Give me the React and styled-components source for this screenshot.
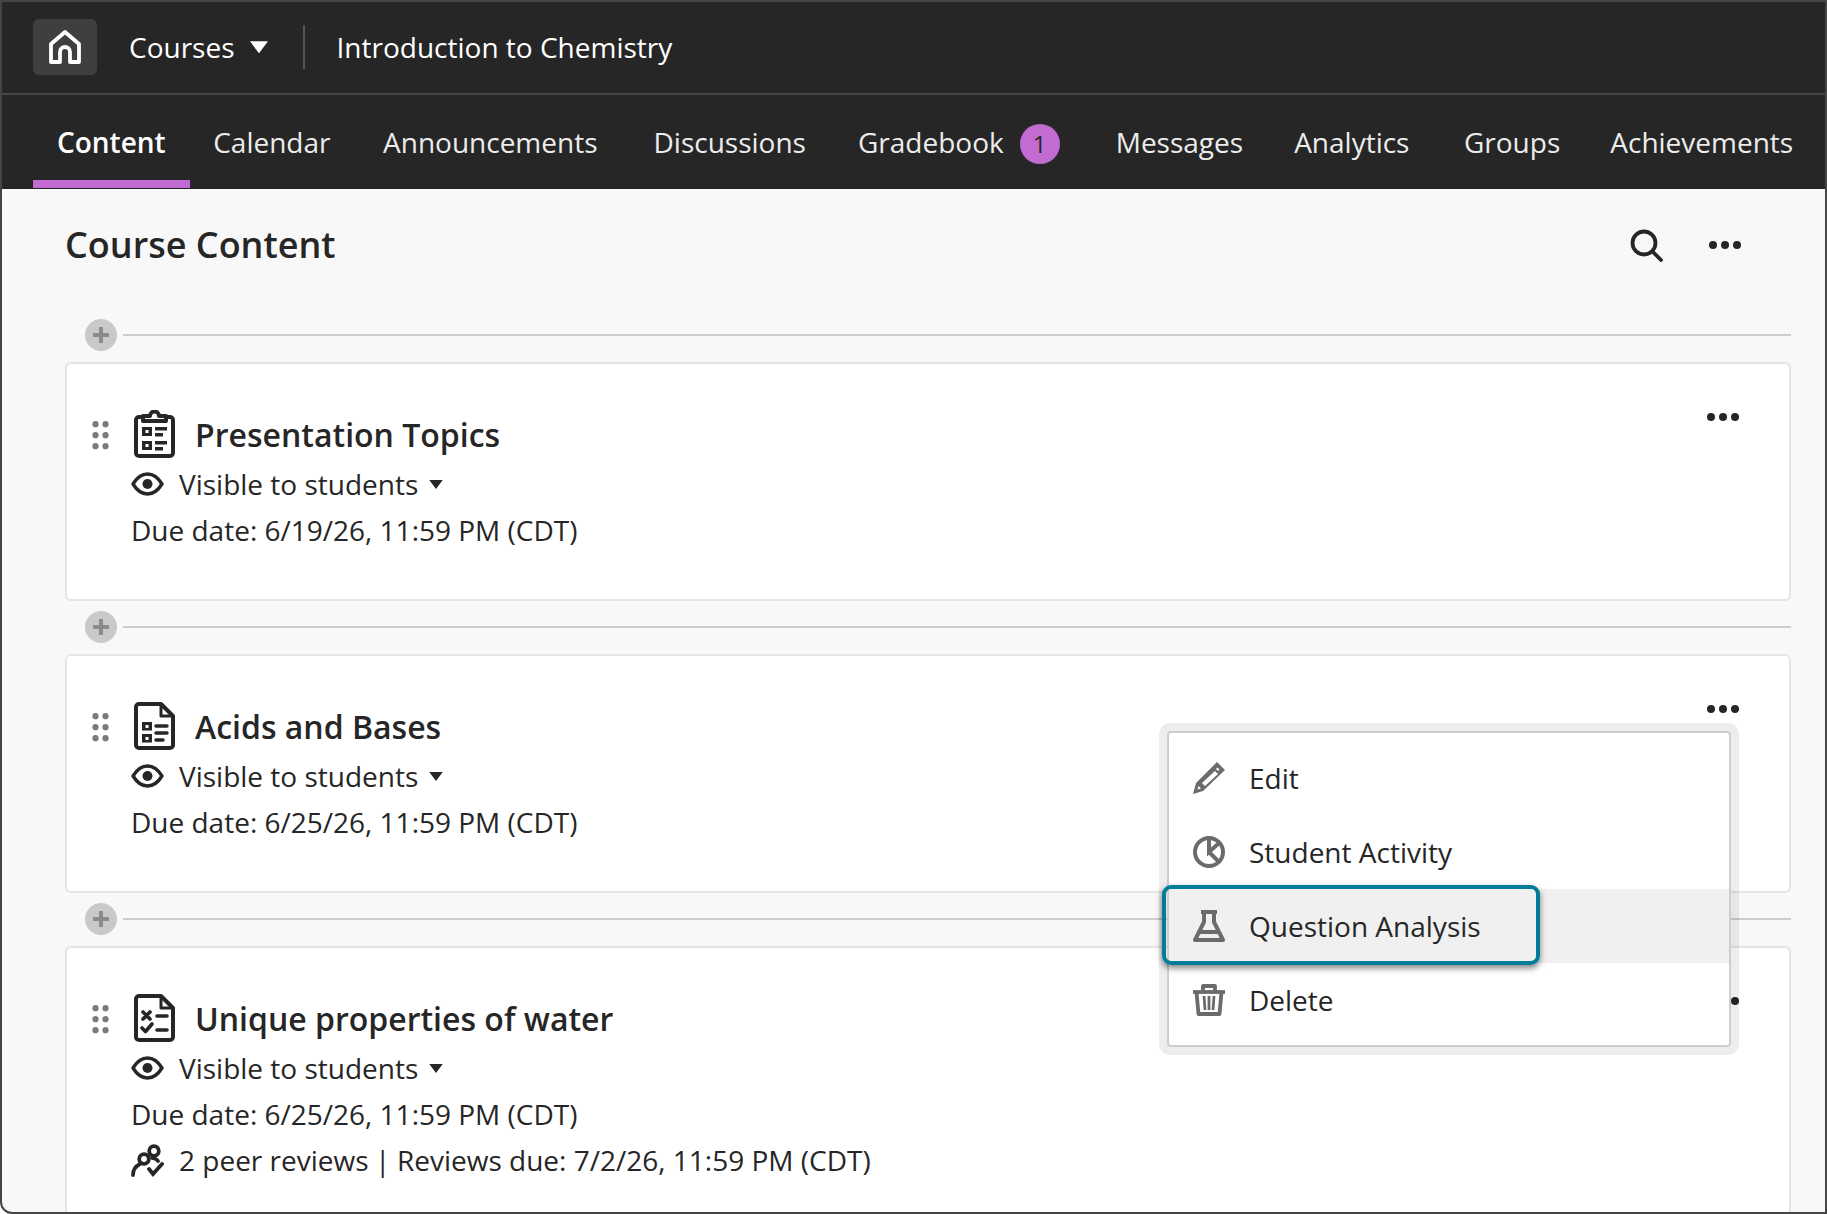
import React from "react";
import styled, { createGlobalStyle } from "styled-components";

const GlobalStyle = createGlobalStyle`
  html, body {
    margin: 0;
    padding: 0;
    background: #fff;
  }
  *, *::before, *::after {
    box-sizing: border-box;
  }
`;

const Frame = styled.div`
  width: 1827px;
  height: 1214px;
  overflow: hidden;
  border: 2px solid #454545;
  border-radius: 0 0 0 12px;
  background: #f8f8f8;
  font-family: "Open Sans", "Liberation Sans", sans-serif;
  color: #262626;
  display: flex;
  flex-direction: column;
`;

const TopBar = styled.header`
  height: 93px;
  flex: none;
  background: #262626;
  border-bottom: 2px solid #454545;
  display: flex;
  align-items: center;
  padding: 0 0 1px 31px;
  color: #fff;
  font-size: 28px;
`;

const HomeButton = styled.div`
  width: 64px;
  height: 56px;
  border-radius: 6px;
  background: #3f3f3f;
  display: flex;
  align-items: center;
  justify-content: center;
`;

const CoursesLink = styled.div`
  display: flex;
  align-items: center;
  margin-left: 32px;
  gap: 15px;
`;

const Divider = styled.div`
  width: 2px;
  height: 44px;
  background: #555;
  margin: 0 32px 0 35px;
`;

const Tabs = styled.nav`
  height: 94px;
  flex: none;
  background: #262626;
  display: flex;
  padding-left: 31px;
`;

const Tab = styled.div`
  display: flex;
  align-items: center;
  padding: 8px ${(p) => (p.$active ? 24 : 20)}px 0;
  margin-left: ${(p) => p.$gap || 0}px;
  margin-bottom: 1px;
  font-size: 28px;
  font-weight: ${(p) => (p.$active ? 600 : 400)};
  color: ${(p) => (p.$active ? "#fff" : "#ececec")};
  border-bottom: 8px solid ${(p) => (p.$active ? "#c26cd3" : "transparent")};
`;

const Badge = styled.span`
  width: 40px;
  height: 40px;
  border-radius: 50%;
  background: #c26cd3;
  color: #262626;
  font-size: 24px;
  display: flex;
  align-items: center;
  justify-content: center;
  margin: 4px 0 0 16px;
`;

const Main = styled.main`
  flex: 1;
  padding: 28px 34px 0 63px;
  min-height: 0;
`;

const PageHeader = styled.div`
  height: 56px;
  display: flex;
  align-items: center;
  justify-content: space-between;
  margin-bottom: 46px;
`;

const PageTitle = styled.h1`
  margin: 0 0 2px;
  font-size: 36px;
  font-weight: 600;
  color: #262626;
`;

const HeaderTools = styled.div`
  display: flex;
  align-items: center;
  gap: 46px;
  padding-right: 50px;
`;

const AddRow = styled.div`
  height: 32px;
  margin: 10px 0 11px;
  display: flex;
  align-items: center;
  gap: 6px;
  padding-left: 20px;

  &:first-of-type {
    margin-top: 0;
  }
`;

const AddButton = styled.div`
  width: 32px;
  height: 32px;
  border-radius: 50%;
  background: #c9c9c9;
  flex: none;
  display: flex;
  align-items: center;
  justify-content: center;
`;

const AddLine = styled.div`
  height: 2px;
  flex: 1;
  background: #cdcdcd;
`;

const Card = styled.section`
  position: relative;
  height: ${(p) => (p.$tall ? "300px" : "239px")};
  background: #fff;
  border: 2px solid #e5e5e5;
  border-radius: 6px;
  padding: 46px 50px 0 25px;
  display: flex;
  gap: 22px;
`;

const Body = styled.div`
  flex: 1;
  min-width: 0;
`;

const TitleRow = styled.div`
  display: flex;
  align-items: center;
  height: 48px;
  margin-bottom: 3px;
`;

const TypeIcon = styled.div`
  width: 42px;
  height: 48px;
  margin: 0 20px 0 2px;
  display: flex;
  justify-content: center;
  flex: none;
`;

const Title = styled.h2`
  margin: 0;
  font-size: 32px;
  font-weight: 600;
  color: #262626;
`;

const Meta = styled.div`
  height: 46px;
  display: flex;
  align-items: center;
  font-size: 28px;
  color: #262626;
  white-space: nowrap;
`;

const MetaIcon = styled.span`
  width: 33px;
  margin-right: 15px;
  display: flex;
  flex: none;
`;

const Sep = styled.span`
  margin: 0 6.5px;
`;

const MetaCaret = styled.span`
  margin-left: 10px;
  display: flex;
`;

const Dots = styled.div`
  display: flex;
  gap: 4px;
  margin-left: auto;
  align-self: ${(p) => (p.$top ? "flex-start" : "center")};
  margin-top: ${(p) => (p.$top ? "3px" : "0")};
`;

const Dot = styled.i`
  width: 8px;
  height: 8px;
  border-radius: 50%;
  background: #262626;
`;

const DragGrip = styled.svg`
  flex: none;
  margin-top: 11px;
`;

const Menu = styled.div`
  position: absolute;
  left: 1100px;
  top: 75px;
  width: 564px;
  z-index: 10;
  padding: 8px 0;
  background: #fff;
  border: 2px solid #cdcdcd;
  border-radius: 4px;
  box-shadow: 0 0 0 8px rgba(0, 0, 0, 0.07);
`;

const MenuItem = styled.div`
  position: relative;
  height: 74px;
  display: flex;
  align-items: center;
  gap: 24px;
  padding-left: 24px;
  font-size: 28px;
  color: #262626;
  background: ${(p) => (p.$focused ? "#f0f0f0" : "transparent")};

  ${(p) =>
    p.$focused &&
    `
    &::after {
      content: "";
      position: absolute;
      left: -7px;
      top: -4px;
      bottom: -2px;
      width: 378px;
      border: 4px solid #037c99;
      border-radius: 9px;
      box-shadow: 0 3px 6px rgba(0, 0, 0, 0.5);
    }
  `}
`;

const HomeIcon = () => (
  <svg width="32" height="34" viewBox="0 0 32 34" fill="none" stroke="#fff" strokeWidth="3.8" strokeLinejoin="round">
    <path d="M2 14 16 2l14 12v18h-9V22a5 5 0 0 0-10 0v10H2z" />
  </svg>
);

const DownCaret = ({ width = 18, height = 12.6, color = "#fff" }) => (
  <svg width={width} height={height} viewBox="0 0 18 12">
    <path d="M0 0h18L9 12z" fill={color} />
  </svg>
);

const SearchIcon = () => (
  <svg width="33" height="33" viewBox="0 0 33 33" fill="none" stroke="#262626" strokeWidth="3.8" strokeLinecap="round">
    <circle cx="14" cy="14" r="11.500" />
    <path d="M22.500 22.500 31 31" />
  </svg>
);

const PlusIcon = () => (
  <svg width="16" height="16" viewBox="0 0 16 16">
    <path d="M8 1v14M1 8h14" stroke="#8b8b8b" strokeWidth="4" strokeLinecap="round" />
  </svg>
);

const DragHandle = () => (
  <DragGrip width="17" height="29" viewBox="0 0 17 29" fill="#7a7a7a">
    {[3.2, 14.2, 25.2].map((y) => (
      <g key={y}>
        <circle cx="3.500" cy={y} r="3.100" />
        <circle cx="13.500" cy={y} r="3.100" />
      </g>
    ))}
  </DragGrip>
);

const ClipboardIcon = () => (
  <svg width="41" height="48" viewBox="0 0 41 48" fill="none" stroke="#262626" strokeWidth="4" strokeLinejoin="round">
    <path d="M9 7H5a3 3 0 0 0-3 3v33a3 3 0 0 0 3 3h31a3 3 0 0 0 3-3V10a3 3 0 0 0-3-3h-4" />
    <path d="M9 11V6h7a4.500 4.500 0 0 1 9 0h7v5z" />
    <g fill="#262626" stroke="none">
      <path d="M8 17h10v9H8zM8 31h10v9H8z" />
      <path d="M21 17h12v3.500H21zM21 23h8v3.500h-8zM21 31h12v3.500H21zM21 37h8v3.500h-8z" />
    </g>
    <path d="M11.500 20h3v3h-3zM11.500 34h3v3h-3z" fill="#fff" stroke="none" />
  </svg>
);

const PageIcon = ({ children }) => (
  <svg width="41" height="48" viewBox="0 0 41 48" fill="none" stroke="#262626" strokeWidth="4" strokeLinejoin="round">
    <path d="M27 2H5a3 3 0 0 0-3 3v38a3 3 0 0 0 3 3h31a3 3 0 0 0 3-3V14z" />
    <path d="M27 2v12h12" strokeWidth="3" />
    {children}
  </svg>
);

const AssignmentIcon = () => (
  <PageIcon>
    <path d="M8 20h10v8.500H8zM8 32h10v8.500H8z" fill="#262626" stroke="none" />
    <path d="M11.500 23h3v3h-3zM11.500 35h3v3h-3z" fill="#fff" stroke="none" />
    <path d="M22 24h11M22 31h11M22 38h7" strokeWidth="3.400" strokeLinecap="round" />
  </PageIcon>
);

const TestIcon = () => (
  <PageIcon>
    <path d="m9 18 7 7m0-7-7 7M8 34l3.500 3.500L18 30" strokeWidth="3.600" strokeLinecap="round" />
    <path d="M23 22h10M23 36h10" strokeWidth="3.600" strokeLinecap="round" />
  </PageIcon>
);

const EyeIcon = () => (
  <svg width="33" height="24" viewBox="0 0 33 24" fill="none">
    <path d="M2 12C6 5.500 11 2 16.500 2S27 5.500 31 12c-4 6.500-9 10-14.500 10S6 18.500 2 12z" stroke="#262626" strokeWidth="3.400" strokeLinejoin="round" />
    <circle cx="16.500" cy="12" r="5" fill="#262626" />
  </svg>
);

const PeerIcon = () => (
  <svg width="33" height="33" viewBox="0 0 33 33" fill="none" stroke="#262626" strokeWidth="3.800" strokeLinecap="round">
    <circle cx="23" cy="7" r="4.800" />
    <circle cx="13" cy="15" r="4.800" />
    <path d="M2 31c0-5 3-9 7-11" />
    <path d="M21 14c3 .5 5 1 6 3" />
    <path d="m18 25 4 5 9-10" />
  </svg>
);

const PencilIcon = () => (
  <svg width="32" height="32" viewBox="0 0 32 32">
    <path fillRule="evenodd" fill="#6b6b6b" d="M24 0l8 8-22 21-10 3 3-11zM22 9l3 3-13 12-3-3zM24.500 5.500l2 2-1.500 1.500-2-2zM5.500 24l-1 3.500 3.500-1z" />
  </svg>
);

const PieIcon = () => (
  <svg width="32" height="32" viewBox="0 0 32 32" fill="none" stroke="#6b6b6b" strokeWidth="4">
    <circle cx="16" cy="16" r="14" />
    <path d="M16 2v14l10-9M16 16l9 9" />
  </svg>
);

const FlaskIcon = () => (
  <svg width="32" height="32" viewBox="0 0 32 32" fill="none" stroke="#6b6b6b" strokeWidth="4" strokeLinejoin="round">
    <path d="M8 2h16" />
    <path d="M11 2v10L2 30h28l-9-18V2" />
    <path d="M7 22h18" />
  </svg>
);

const TrashIcon = () => (
  <svg width="32" height="32" viewBox="0 0 32 32" fill="none" stroke="#6b6b6b" strokeWidth="3.800" strokeLinejoin="round">
    <path d="M0 8h32" />
    <path d="M10 7V2h12v5" />
    <path d="M3.500 8l2 22h21l2-22" />
    <path d="M11 12l1 14M16 12v14M21 12l-1 14" strokeWidth="2.800" />
  </svg>
);

const ThreeDots = ({ top }) => (
  <Dots $top={top}>
    <Dot />
    <Dot />
    <Dot />
  </Dots>
);

const Add = () => (
  <AddRow>
    <AddButton>
      <PlusIcon />
    </AddButton>
    <AddLine />
  </AddRow>
);

const Visibility = () => (
  <Meta>
    <MetaIcon>
      <EyeIcon />
    </MetaIcon>
    Visible to students
    <MetaCaret>
      <DownCaret width={16} height={9} color="#262626" />
    </MetaCaret>
  </Meta>
);

const App = () => (
  <Frame>
    <GlobalStyle />
    <TopBar>
      <HomeButton>
        <HomeIcon />
      </HomeButton>
      <CoursesLink>
        Courses
        <DownCaret />
      </CoursesLink>
      <Divider />
      Introduction to Chemistry
    </TopBar>
    <Tabs>
      <Tab $active>Content</Tab>
      <Tab $gap={3.5}>Calendar</Tab>
      <Tab $gap={12.5}>Announcements</Tab>
      <Tab $gap={16}>Discussions</Tab>
      <Tab $gap={12}>
        Gradebook
        <Badge>1</Badge>
      </Tab>
      <Tab $gap={16}>Messages</Tab>
      <Tab $gap={11}>Analytics</Tab>
      <Tab $gap={14.5}>Groups</Tab>
      <Tab $gap={10}>Achievements</Tab>
    </Tabs>
    <Main>
      <PageHeader>
        <PageTitle>Course Content</PageTitle>
        <HeaderTools>
          <SearchIcon />
          <Dots>
            <Dot />
            <Dot />
            <Dot />
          </Dots>
        </HeaderTools>
      </PageHeader>

      <Add />
      <Card>
        <DragHandle />
        <Body>
          <TitleRow>
            <TypeIcon>
              <ClipboardIcon />
            </TypeIcon>
            <Title>Presentation Topics</Title>
            <ThreeDots top />
          </TitleRow>
          <Visibility />
          <Meta>Due date: 6/19/26, 11:59 PM (CDT)</Meta>
        </Body>
      </Card>

      <Add />
      <Card>
        <DragHandle />
        <Body>
          <TitleRow>
            <TypeIcon>
              <AssignmentIcon />
            </TypeIcon>
            <Title>Acids and Bases</Title>
            <ThreeDots top />
          </TitleRow>
          <Visibility />
          <Meta>Due date: 6/25/26, 11:59 PM (CDT)</Meta>
        </Body>
        <Menu>
          <MenuItem>
            <PencilIcon />
            Edit
          </MenuItem>
          <MenuItem>
            <PieIcon />
            Student Activity
          </MenuItem>
          <MenuItem $focused>
            <FlaskIcon />
            Question Analysis
          </MenuItem>
          <MenuItem>
            <TrashIcon />
            Delete
          </MenuItem>
        </Menu>
      </Card>

      <Add />
      <Card $tall>
        <DragHandle />
        <Body>
          <TitleRow>
            <TypeIcon>
              <TestIcon />
            </TypeIcon>
            <Title>Unique properties of water</Title>
            <ThreeDots top />
          </TitleRow>
          <Visibility />
          <Meta>Due date: 6/25/26, 11:59 PM (CDT)</Meta>
          <Meta>
            <MetaIcon>
              <PeerIcon />
            </MetaIcon>
            2 peer reviews
            <Sep>|</Sep>
            Reviews due: 7/2/26, 11:59 PM (CDT)
          </Meta>
        </Body>
      </Card>
    </Main>
  </Frame>
);

export default App;
